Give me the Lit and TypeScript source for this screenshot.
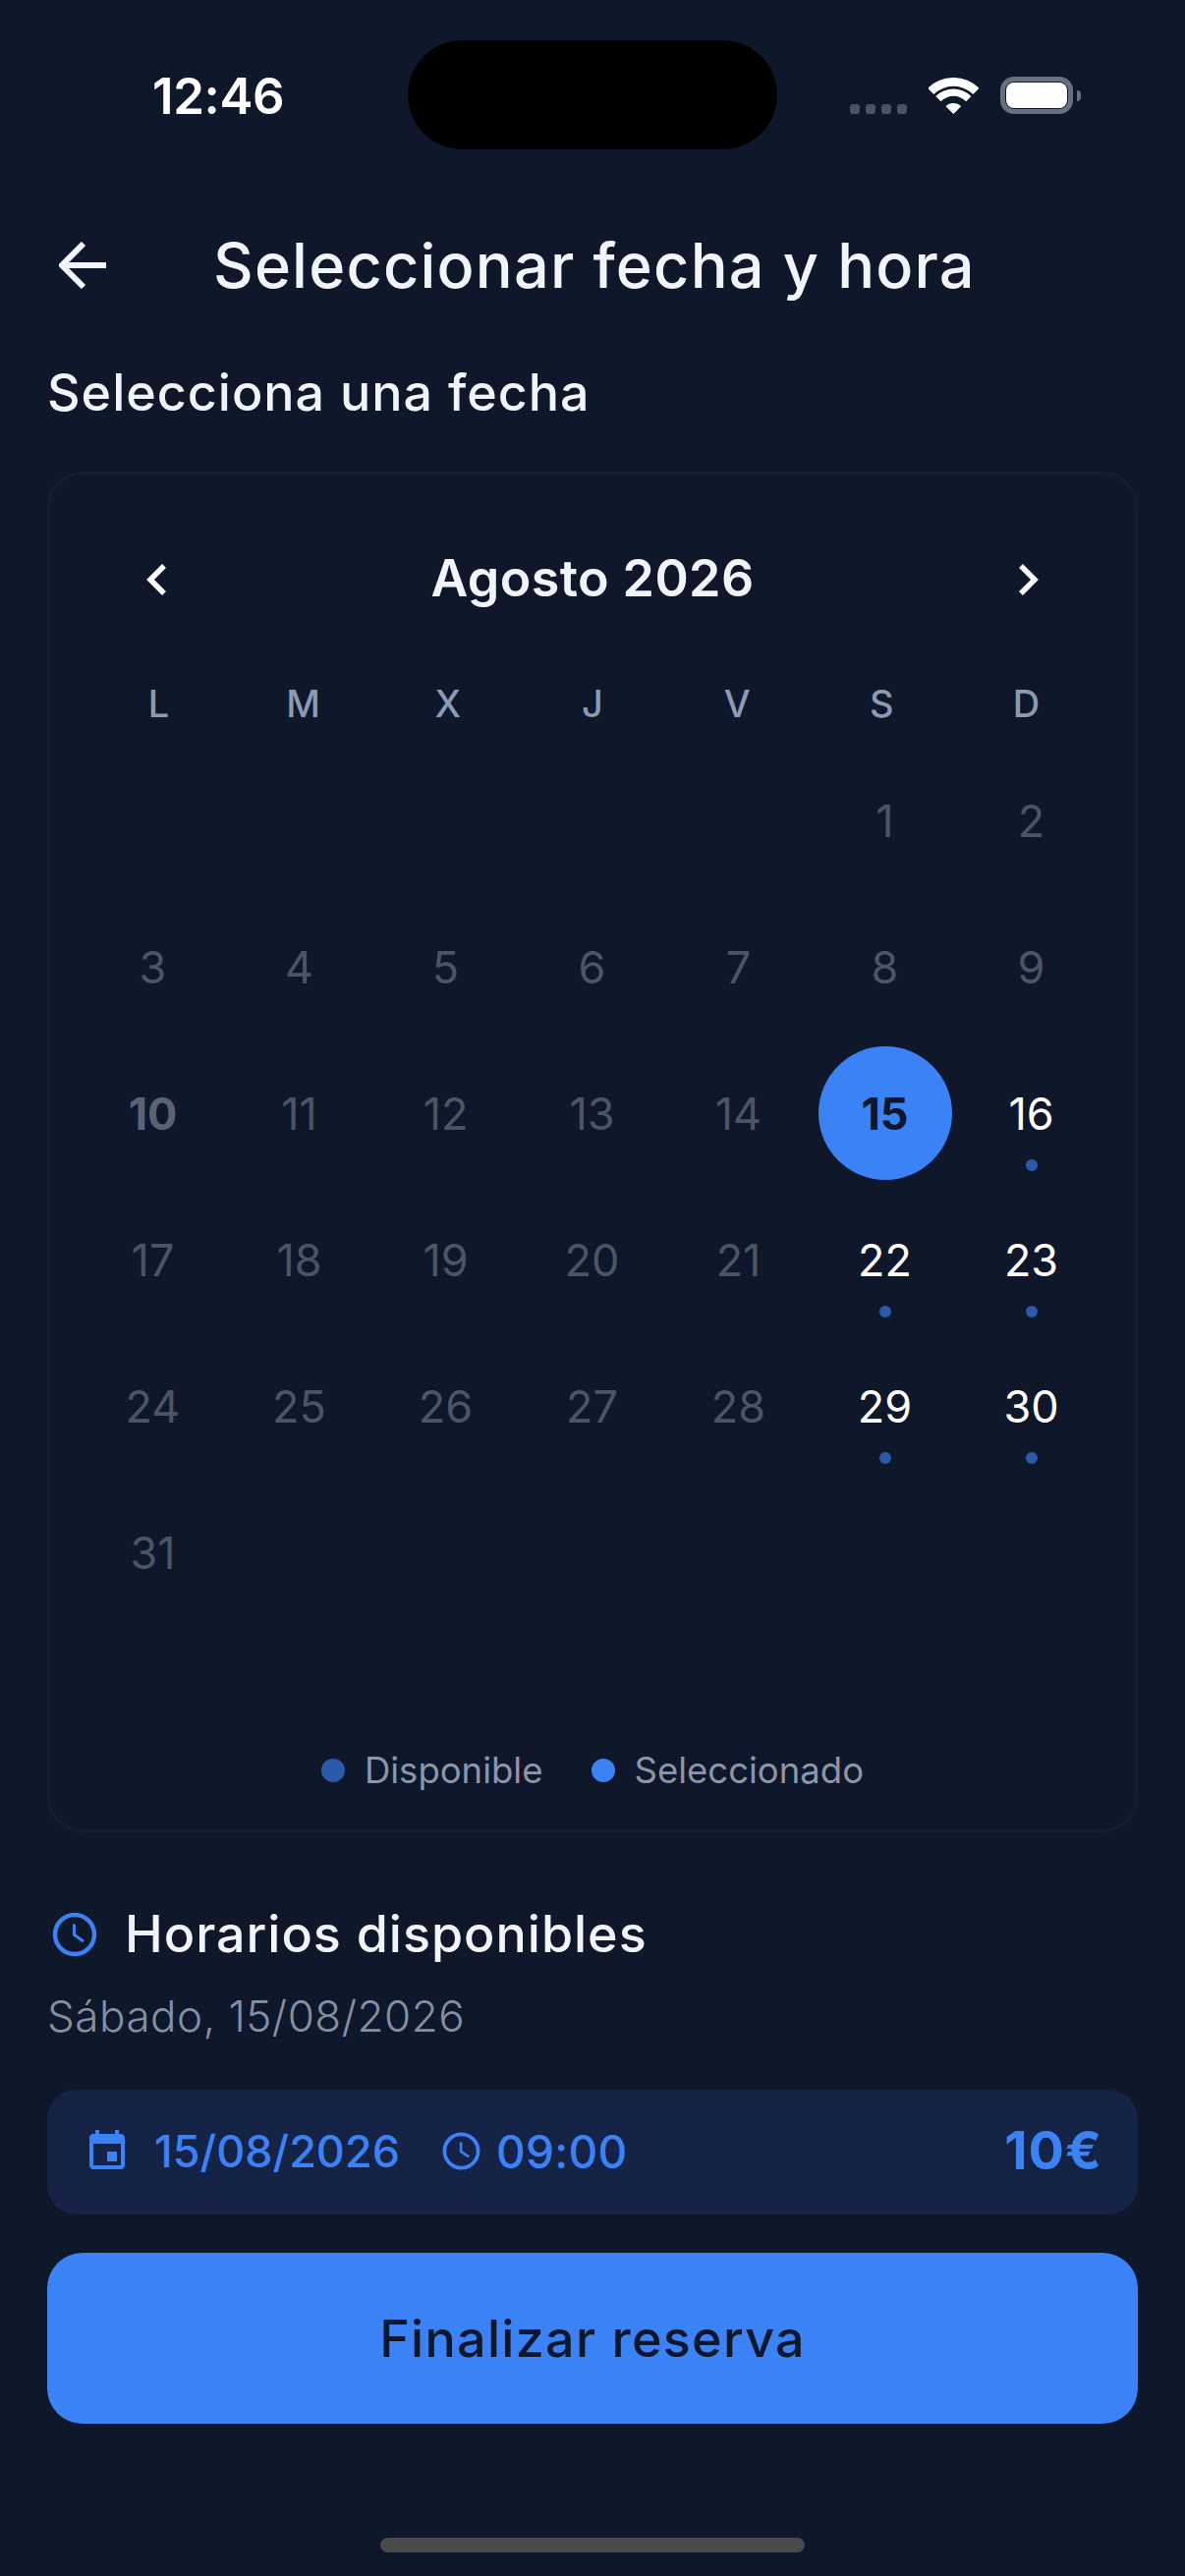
import { LitElement, html, css, svg } from "lit";
import { customElement } from "lit/decorators.js";

const available = new Set([16, 22, 23, 29, 30]);
const DAYS: (number | null)[] = [null, null, null, null, null, 1, 2];
for (let d = 3; d <= 31; d++) DAYS.push(d);
while (DAYS.length < 42) DAYS.push(null);

const clock = (cls: string) => html`<svg class=${cls} viewBox="0 0 48 48" fill="none" stroke="#3b82f6">
  <circle cx="24" cy="24" r="20" stroke-width="4.4"></circle>
  <path d="M23.5 13.5V24.5L33 31" stroke-width="3"></path>
</svg>`;

@customElement("app-root")
export class AppRoot extends LitElement {
  static styles = css`
    :host { display: block; width: 1206px; height: 2622px; background: #0f172a; color: #f1f5f9; font-family: Inter, "Liberation Sans", sans-serif; overflow: hidden; }
    .status { position: relative; height: 194px; display: flex; align-items: center; justify-content: space-between; padding: 0 114px 0 155px; box-sizing: border-box; }
    .time { font-size: 51px; font-weight: 600; color: #fff; letter-spacing: -0.4px; line-height: 1; }
    .island { position: absolute; left: 415px; top: 41px; width: 376px; height: 111px; border-radius: 56px; background: #000; }
    .sys { display: flex; align-items: flex-end; height: 38px; }
    .signal { display: flex; gap: 6px; }
    .signal i { width: 10px; height: 10px; border-radius: 3px; background: #4b5363; display: block; }
    .wifi { width: 51px; height: 37px; margin-left: 22px; display: block; }
    .battery { width: 74px; height: 38px; margin-left: 22px; border: 5px solid #69707d; border-radius: 14px; box-sizing: border-box; padding: 1px; position: relative; }
    .battery b { display: block; height: 100%; background: #fff; border-radius: 8px; }
    .battery::after { content: ""; position: absolute; right: -13px; top: 9px; width: 4px; height: 11px; background: #69707d; border-radius: 0 6px 6px 0; }
    .header { height: 152px; display: flex; align-items: center; padding-left: 60px; gap: 109px; }
    .back { width: 48px; height: 48px; display: block; flex: none; }
    h1 { margin: 0; font-size: 63px; font-weight: 500; line-height: 1; color: #f1f5f9; letter-spacing: 1.2px; }
    .page { padding: 0 48px; }
    h2 { margin: 27px 0 53px; font-size: 52px; line-height: 54px; font-weight: 500; color: #f1f5f9; letter-spacing: 1px; }
    .card { border: 3px solid #151e30; border-radius: 36px; padding: 30px 30px 36px; height: 1385px; box-sizing: border-box; }
    .month { height: 152px; display: flex; align-items: center; justify-content: space-between; padding: 2px 54px 0; box-sizing: border-box; }
    .month svg { width: 48px; height: 48px; display: block; }
    .month span { font-size: 52px; font-weight: 600; color: #f1f5f9; letter-spacing: 0.4px; margin-top: -3px; }
    .weekdays { height: 95px; padding: 6px 7px 0; box-sizing: border-box; display: grid; grid-template-columns: repeat(7, 1fr); align-items: center; text-align: center; font-size: 38px; font-weight: 500; color: #8b9bb2; }
    .grid { display: grid; grid-template-columns: repeat(7, 149px); grid-auto-rows: 149px; }
    .cell { display: flex; align-items: center; justify-content: center; }
    .num { position: relative; width: 136px; height: 136px; border-radius: 50%; display: flex; align-items: center; justify-content: center; font-size: 45px; font-weight: 400; color: #4b5563; padding-top: 2px; box-sizing: border-box; }
    .num.today { font-weight: 700; color: #5b6371; }
    .num.avail { color: #fff; }
    .num.sel { background: #3b82f6; color: #0f172a; font-weight: 700; }
    .num .dot { position: absolute; left: 62px; bottom: 9px; width: 12px; height: 12px; border-radius: 50%; background: #2a5aa9; }
    .legend { margin-top: 124px; height: 48px; display: flex; align-items: center; justify-content: center; font-size: 36.5px; color: #8b96a8; font-weight: 400; }
    .legend i { width: 24px; height: 24px; border-radius: 50%; margin-right: 20px; }
    .legend span + i { margin-left: 49px; }
    .legend .dot-a { background: #2a5aa9; }
    .legend .dot-b { background: #3b82f6; }
    .row { margin-top: 76px; height: 54px; display: flex; align-items: center; gap: 27px; padding-left: 4px; }
    .row .ic-l { margin-top: 2px; }
    .row h3 { margin: 0; font-size: 52px; font-weight: 500; color: #f1f5f9; letter-spacing: 1px; }
    .ic-l { width: 48px; height: 48px; display: block; }
    .sub { margin-top: 30px; height: 54px; line-height: 54px; font-size: 44px; font-weight: 300; color: #8390a4; letter-spacing: 0.5px; }
    .summary { margin-top: 48px; height: 127px; border-radius: 30px; background: #142346; display: flex; align-items: center; padding: 0 36px 2px 37px; box-sizing: border-box; color: #3b82f6; font-size: 45px; font-weight: 500; }
    .cal { width: 48px; height: 48px; display: block; margin-right: 24px; }
    .ic-s { width: 41px; height: 41px; display: block; margin: 0 15px 0 42px; }
    .clock-time { font-size: 46px; letter-spacing: 0.3px; }
    .price { margin-left: auto; margin-top: -3px; font-size: 54px; font-weight: 700; letter-spacing: 1px; }
    .cta { margin-top: 39px; height: 174px; border-radius: 36px; background: #3b82f6; color: #0f172a; display: flex; align-items: center; justify-content: center; font-size: 52px; font-weight: 500; letter-spacing: 1.3px; }
    .homewrap { margin-top: 116px; display: flex; justify-content: center; }
    .home { width: 432px; height: 15px; border-radius: 8px; background: #4a4a4a; }
  `;

  render() {
    return html`
      <div class="status">
        <span class="time">12:46</span>
        <div class="island"></div>
        <div class="sys">
          <div class="signal"><i></i><i></i><i></i><i></i></div>
          <svg class="wifi" viewBox="0 0 151 110" fill="#fff">
            ${svg`<path d="M-2.8 32.2A110 110 0 0 1 152.8 32.2L134.4 50.6A84 84 0 0 0 15.6 50.6Z"></path>
            <path d="M21.3 56.3A76 76 0 0 1 128.7 56.3L113.2 71.8A54 54 0 0 0 36.8 71.8Z"></path>
            <path d="M51.7 86.7A33 33 0 0 1 98.3 86.7L75 110Z"></path>`}
          </svg>
          <div class="battery"><b></b></div>
        </div>
      </div>
      <div class="header">
        <svg class="back" viewBox="0 0 48 48" fill="none" stroke="#f1f5f9" stroke-width="6"><path d="M48 24H3M25 2L3 24L25 46"></path></svg>
        <h1>Seleccionar fecha y hora</h1>
      </div>
      <div class="page">
        <h2>Selecciona una fecha</h2>
        <div class="card">
          <div class="month">
            <svg viewBox="0 0 48 48" fill="none" stroke="#fff" stroke-width="5.5"><path d="M32 10L18 24L32 38"></path></svg>
            <span>Agosto 2026</span>
            <svg viewBox="0 0 48 48" fill="none" stroke="#fff" stroke-width="5.5"><path d="M16 10L30 24L16 38"></path></svg>
          </div>
          <div class="weekdays">${["L", "M", "X", "J", "V", "S", "D"].map((d) => html`<span>${d}</span>`)}</div>
          <div class="grid">
            ${DAYS.map((d) => {
              if (d === null) return html`<div class="cell"></div>`;
              const cls = d === 15 ? "sel" : available.has(d) ? "avail" : d === 10 ? "today" : "";
              return html`<div class="cell"><div class="num ${cls}">${d}${available.has(d) ? html`<i class="dot"></i>` : ""}</div></div>`;
            })}
          </div>
          <div class="legend">
            <i class="dot-a"></i><span>Disponible</span>
            <i class="dot-b"></i><span>Seleccionado</span>
          </div>
        </div>
        <div class="row">${clock("ic-l")}<h3>Horarios disponibles</h3></div>
        <div class="sub">Sábado, 15/08/2026</div>
        <div class="summary">
          <svg class="cal" viewBox="0 0 24 24" fill="#3b82f6"><path d="M17 12h-5v5h5v-5zM16 1v2H8V1H6v2H5c-1.11 0-2 .9-2 2v14c0 1.1.89 2 2 2h14c1.1 0 2-.9 2-2V5c0-1.1-.9-2-2-2h-1V1h-2zm3 18H5V8h14v11z"></path></svg>
          <span>15/08/2026</span>
          ${clock("ic-s")}
          <span class="clock-time">09:00</span>
          <span class="price">10€</span>
        </div>
        <div class="cta">Finalizar reserva</div>
      </div>
      <div class="homewrap"><div class="home"></div></div>
    `;
  }
}
